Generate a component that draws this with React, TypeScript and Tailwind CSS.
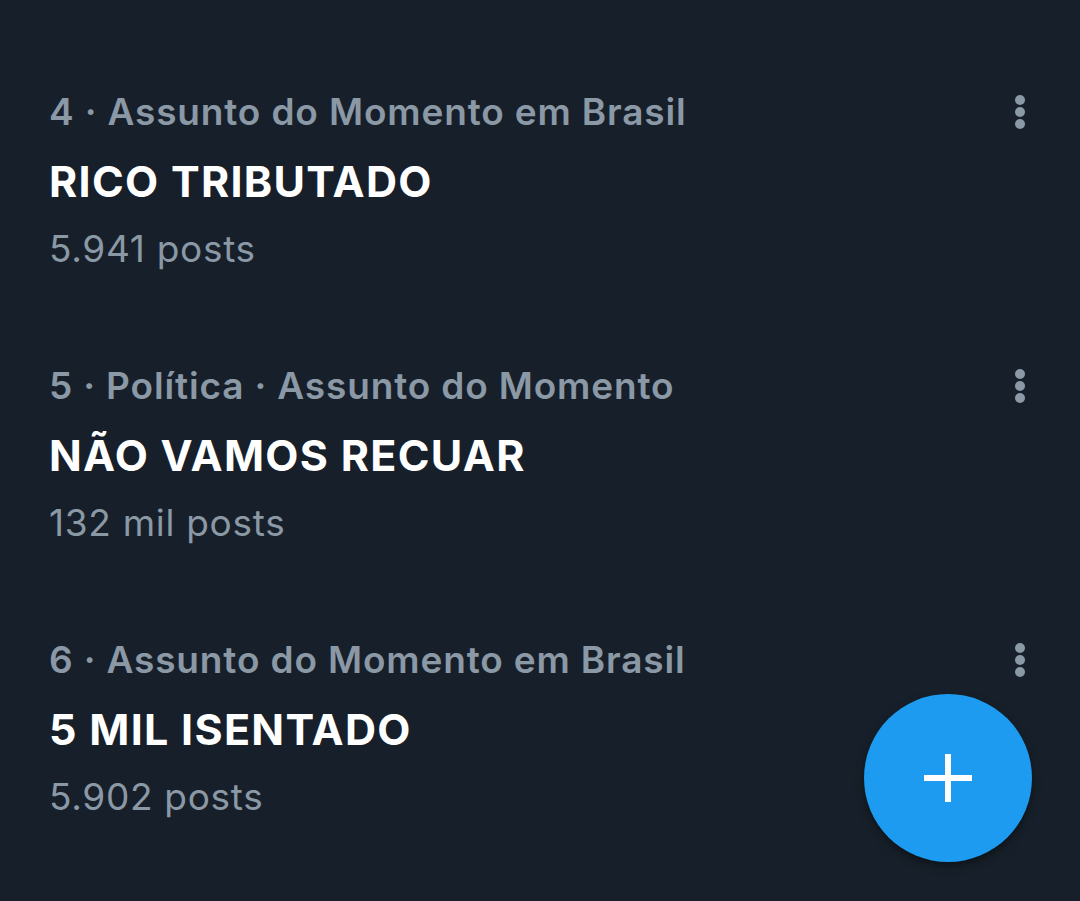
type Trend = { meta: string; title: string; posts: string };

const trends: Trend[] = [
  { meta: "4 · Assunto do Momento em Brasil", title: "RICO TRIBUTADO", posts: "5.941 posts" },
  { meta: "5 · Política · Assunto do Momento", title: "NÃO VAMOS RECUAR", posts: "132 mil posts" },
  { meta: "6 · Assunto do Momento em Brasil", title: "5 MIL ISENTADO", posts: "5.902 posts" },
];

function MoreIcon() {
  return (
    <svg width="12" height="36" viewBox="0 0 12 36" className="text-[#8b98a5]">
      <circle cx="6" cy="6" r="5" fill="currentColor" />
      <circle cx="6" cy="18" r="5" fill="currentColor" />
      <circle cx="6" cy="30" r="5" fill="currentColor" />
    </svg>
  );
}

function PlusIcon() {
  return (
    <svg width="48" height="48" viewBox="0 0 48 48" fill="white">
      <rect x="21" y="0" width="6" height="48" />
      <rect x="0" y="21" width="48" height="6" />
    </svg>
  );
}

function TrendRow({ trend }: { trend: Trend }) {
  return (
    <div className="flex items-start justify-between pl-[49px] pr-[54px] h-[274px]">
      <div className="flex flex-col">
        <div className="text-[37px] leading-[44px] font-semibold text-[#8b98a5] tracking-[0.85px]">{trend.meta}</div>
        <div className="mt-[25px] text-[43px] leading-[44px] font-bold text-white tracking-[1.3px]">{trend.title}</div>
        <div className="mt-[24px] text-[37px] leading-[44px] text-[#8b98a5] tracking-[0.7px]">{trend.posts}</div>
      </div>
      <div className="pt-[4px]">
        <MoreIcon />
      </div>
    </div>
  );
}

export default function App() {
  return (
    <main
      className="relative w-[1080px] h-[901px] overflow-hidden bg-[#17202a]"
      style={{ fontFamily: "Inter, Roboto, sans-serif" }}
    >
      <div className="pt-[90px]">
        {trends.map((t) => (
          <TrendRow key={t.title} trend={t} />
        ))}
      </div>

      <button className="absolute left-[864px] top-[694px] w-[168px] h-[168px] rounded-full bg-[#1d9bf0] flex items-center justify-center shadow-[0_4px_10px_rgba(0,0,0,0.45)]">
        <PlusIcon />
      </button>
    </main>
  );
}
